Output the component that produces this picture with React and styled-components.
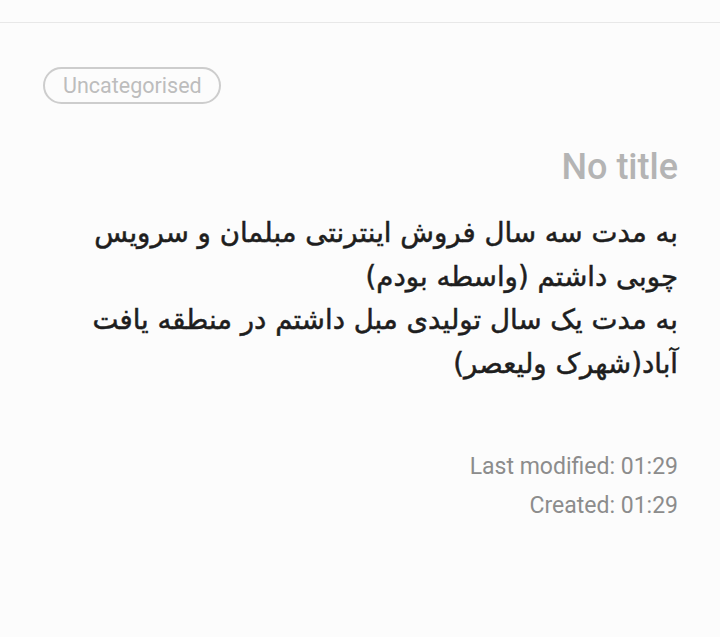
import React from "react";
import styled, { createGlobalStyle } from "styled-components";

const Global = createGlobalStyle`
  html, body { margin: 0; padding: 0; background: #fcfcfc; }
  body { font-family: Roboto, "Liberation Sans", sans-serif; }
`;

const Page = styled.div`
  width: 720px;
  height: 637px;
  background: #fcfcfc;
  overflow: hidden;
`;

const TopBar = styled.div`
  height: 22px;
  border-bottom: 1px solid #e8e8e8;
`;

const Content = styled.div`
  padding: 44px 42px 0 43px;
  display: flex;
  flex-direction: column;
`;

const Chip = styled.div`
  box-sizing: border-box;
  align-self: flex-start;
  height: 37px;
  padding: 0 17px 0 18px;
  border: 2.5px solid #cdcdcd;
  border-radius: 20px;
  display: flex;
  align-items: center;
  font-size: 21.5px;
  color: #bdbdbd;
  font-family: Roboto, sans-serif;
`;

const Title = styled.div`
  margin-top: 42px;
  text-align: right;
  font-size: 36px;
  line-height: 42px;
  color: #b4b4b4;
  font-weight: 500;
`;

const Body = styled.div`
  margin-top: 23px;
  direction: rtl;
  text-align: right;
  font-family: "DejaVu Sans", sans-serif;
  font-size: 27.6px;
  line-height: 43.5px;
  color: #1e1e1e;
  -webkit-text-stroke: 0.5px #1e1e1e;
`;

const Meta = styled.div`
  margin-top: 62px;
  display: flex;
  flex-direction: column;
  align-items: flex-end;
`;

const MetaLine = styled.div`
  font-size: 23px;
  line-height: 39px;
  color: #8c8c8c;
`;

export default function App() {
  return (
    <Page>
      <Global />
      <TopBar />
      <Content>
        <Chip>Uncategorised</Chip>
        <Title>No title</Title>
        <Body>
          به مدت سه سال فروش اینترنتی مبلمان و سرویس چوبی داشتم (واسطه بودم)
          <br />
          به مدت یک سال تولیدی مبل داشتم در منطقه یافت آباد(شهرک ولیعصر)
        </Body>
        <Meta>
          <MetaLine>Last modified: 01:29</MetaLine>
          <MetaLine>Created: 01:29</MetaLine>
        </Meta>
      </Content>
    </Page>
  );
}
